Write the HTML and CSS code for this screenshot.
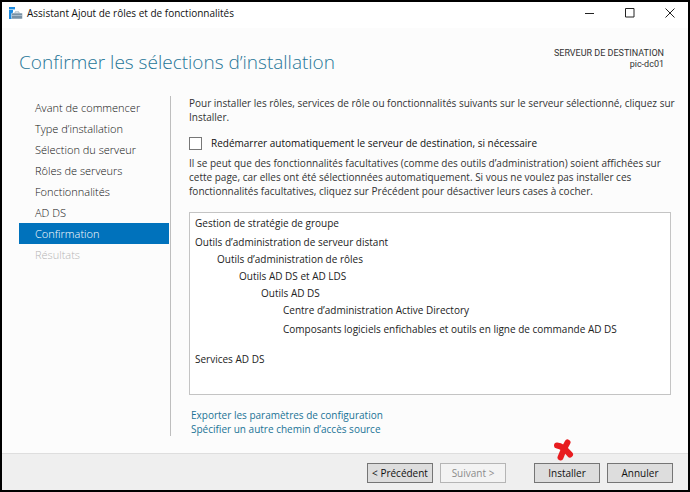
FILE: index.html
```html
<!DOCTYPE html>
<html lang="fr">
<head>
  <meta charset="UTF-8" />
  <title>Assistant Ajout de rôles et de fonctionnalités</title>
  <meta name="viewport" content="width=device-width, initial-scale=1" />
  <link rel="stylesheet" href="styles.css">
</head>
<body>
  <div class="window">
    <div class="titlebar">
      <svg class="app-icon" width="14" height="14" viewBox="0 0 14 14">
        <path d="M0 1h6v2H0zM0 4h4v9H0z" fill="#1d8be0" />
        <path d="M0 3h6v1H0z" fill="#9bd0f5" />
        <path d="M6 7.500V6h4v1.500" fill="none" stroke="#8ea3b3" />
        <rect x="2.500" y="7" width="11" height="6" rx="1" fill="#7891a5" stroke="#fff" stroke-width=".5" />
        <path d="M3 9.500h10" stroke="#a9bccb" />
      </svg>
      <span class="title">Assistant Ajout de rôles et de fonctionnalités</span>
      <div class="window-controls">
        <button class="window-btn" aria-label="Réduire">
          <svg width="10" height="10" viewBox="0 0 10 10"><path d="M0 5.500h9" /></svg>
        </button>
        <button class="window-btn" aria-label="Agrandir">
          <svg width="10" height="10" viewBox="0 0 10 10"><path d="M.5.5h8.500v8.500H.5z" /></svg>
        </button>
        <button class="window-btn" aria-label="Fermer">
          <svg width="10" height="10" viewBox="0 0 10 10"><path d="M.5.5l9 9M9.500.5l-9 9" /></svg>
        </button>
      </div>
    </div>

    <div class="header">
      <h1>Confirmer les sélections d’installation</h1>
      <div class="server">SERVEUR DE DESTINATION<br>pic-dc01</div>
    </div>

    <div class="content">
      <nav class="steps">
        <a class="step" href="#">Avant de commencer</a>
        <a class="step" href="#">Type d’installation</a>
        <a class="step" href="#">Sélection du serveur</a>
        <a class="step" href="#">Rôles de serveurs</a>
        <a class="step" href="#">Fonctionnalités</a>
        <a class="step" href="#">AD DS</a>
        <a class="step active" href="#">Confirmation</a>
        <a class="step disabled">Résultats</a>
      </nav>

      <main class="panel">
        <p class="intro">Pour installer les rôles, services de rôle ou fonctionnalités suivants sur le serveur sélectionné, cliquez sur Installer.</p>
        <div class="restart">
          <input type="checkbox" id="restart" />
          <label for="restart">Redémarrer automatiquement le serveur de destination, si nécessaire</label>
        </div>
        <p>Il se peut que des fonctionnalités facultatives (comme des outils d’administration) soient affichées sur cette page, car elles ont été sélectionnées automatiquement. Si vous ne voulez pas installer ces fonctionnalités facultatives, cliquez sur Précédent pour désactiver leurs cases à cocher.</p>

        <ul class="selection">
          <li class="group">Gestion de stratégie de groupe</li>
          <li>Outils d’administration de serveur distant
            <ul>
              <li>Outils d’administration de rôles
                <ul>
                  <li>Outils AD DS et AD LDS
                    <ul>
                      <li>Outils AD DS
                        <ul>
                          <li class="group">Centre d’administration Active Directory</li>
                          <li class="group last">Composants logiciels enfichables et outils en ligne de commande AD DS</li>
                        </ul>
                      </li>
                    </ul>
                  </li>
                </ul>
              </li>
            </ul>
          </li>
          <li>Services AD DS</li>
        </ul>

        <div class="links">
          <a href="#">Exporter les paramètres de configuration</a>
          <a href="#">Spécifier un autre chemin d’accès source</a>
        </div>
      </main>
    </div>

    <div class="footer">
      <div class="btn-group">
        <button class="btn">&lt; Précédent</button>
        <button class="btn" disabled>Suivant &gt;</button>
      </div>
      <div class="btn-group">
        <button class="btn">Installer
          <svg class="mark" width="20" height="22" viewBox="0 0 20 22">
            <path d="M3 6.500Q9 7 16 15.500M13.500 3.500Q9.500 10 6.500 18.500" />
          </svg>
        </button>
        <button class="btn">Annuler</button>
      </div>
    </div>
  </div>
</body>
</html>
```

FILE: styles.css
```css
* { box-sizing: border-box; }
body { margin: 0; font-family: "Open Sans", "Noto Sans", sans-serif; font-size: 10px; line-height: 14px; color: #333; }
p, h1, ul { margin: 0; padding: 0; }
a { color: inherit; text-decoration: none; }
button { font: inherit; padding: 0; }
.window { display: flex; flex-direction: column; min-height: 100vh; border: 2px solid #000; background: #fcfcfc; }

.titlebar { display: flex; align-items: center; height: 26px; padding: 0 0 4px 7px; background: #fff; color: #111; }
.title { flex: 1; margin-left: 4px; }
.window-controls { display: flex; margin-right: -2px; }
.window-btn { width: 40px; height: 22px; border: none; background: none; }
.window-btn svg { display: block; margin: auto; fill: none; stroke: #222; }

.header { display: flex; justify-content: space-between; padding: 20px 24px 0 17px; height: 68px; }
.header h1 { font-size: 19px; line-height: 28px; font-weight: 300; color: #1f7698; }
.server { font-family: Roboto, sans-serif; font-size: 9px; line-height: 11px; text-align: right; }

.content { flex: 1; display: flex; padding: 0 17px 17px; }
.steps { width: 152px; flex: none; border-right: 1px solid #bebebe; padding: 1px 1px 0 0; }
.step { display: block; padding-left: 16px; line-height: 21px; font-size: 11px; font-weight: 300; color: #111; }
.step.active { background: #0072bc; color: #fff; }
.step.disabled { color: #b5b5b5; }
.panel { flex: 1; padding-left: 18px; }
.intro { margin-right: -10px; }
.restart { display: flex; align-items: center; gap: 9px; margin: 12px 0 6px; color: #111; }
.restart input { appearance: none; width: 13px; height: 13px; margin: 0; border: 1px solid #777; background: #fff; }

.selection { list-style: none; margin-top: 14px; height: 183px; padding: 2px 5px; border: 1px solid #c4c4c4; background: #fff; line-height: 17px; color: #222; overflow: auto; }
.selection ul { list-style: none; padding-left: 22px; }
.selection .group { margin-bottom: 2px; }
.selection .last { margin-bottom: 13px; }
.links { display: flex; flex-direction: column; align-items: flex-start; margin: 13px 0 0 2px; color: #1b7396; }

.footer { display: flex; justify-content: flex-end; gap: 28px; padding: 9px 15px 7px; border-top: 1px solid #dedede; background: #efefef; }
.btn-group { display: flex; gap: 7px; }
.btn { position: relative; width: 66px; height: 20px; border: 1px solid #757575; background: #ddd; color: #111; line-height: 18px; }
.btn:disabled { border-color: #b5b5b5; background: #f3f3f3; color: #8b8b8b; }
.mark { position: absolute; left: 19px; top: -25px; fill: none; stroke: #e81c1f; stroke-width: 6; stroke-linecap: round; }
```
